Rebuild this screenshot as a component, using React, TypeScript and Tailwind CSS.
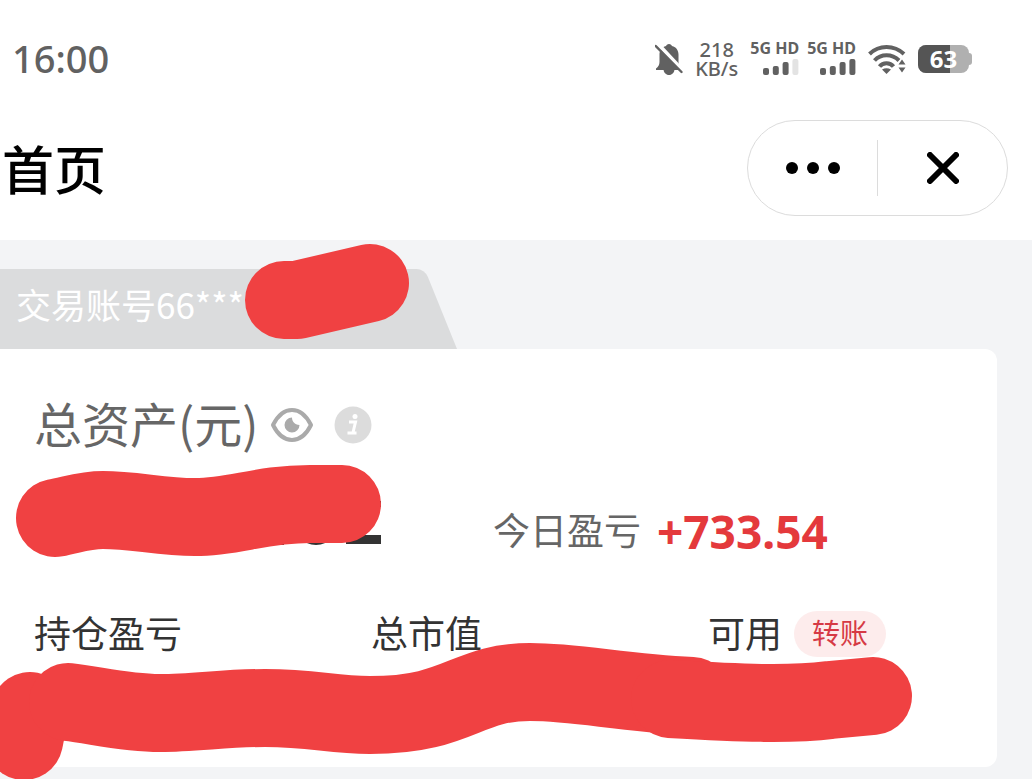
import { useState } from 'react';

function BellOffIcon() {
  return (
    <svg viewBox="0 0 28 33" className="w-7 h-[33px]" aria-hidden="true">
      <path d="M14 1c1.7 0 2.6 1 2.9 2 4.600 1 6.600 4.600 6.600 8.600V19c0 3 .8 5 2.700 6.500v1.500H1v-1.500C3.200 24 4.500 22 4.500 19v-7.400C4.500 7.500 6.600 4 11.100 3c.3-1 1.200-2 2.900-2z" fill="#616161" />
      <path d="M8.500 26h11c0 3.500-2.500 6-5.500 6s-5.500-2.500-5.500-6z" fill="#616161" />
      <path d="M2 0L28 28" stroke="#fff" strokeWidth="4" />
      <path d="M.8 3L26.500 29" stroke="#616161" strokeWidth="2.400" strokeLinecap="round" />
    </svg>
  );
}

function Signal({ bars }: { bars: number }) {
  return (
    <div className="flex flex-col items-end gap-px pb-1">
      <span className="text-[16px] leading-[18px] font-bold">5G HD</span>
      <svg viewBox="0 0 36 17" className="w-9 h-[17px]" aria-hidden="true">
        {[7, 9, 13, 16].map((h, i) => (
          <rect key={h} x={i * 9.8} y={17 - h} width="6" height={h} rx="2" fill={i < bars ? '#616161' : '#e3e3e3'} />
        ))}
      </svg>
    </div>
  );
}

function WifiIcon() {
  return (
    <svg viewBox="0 0 38 32" className="w-[38px] h-8" fill="none" stroke="#616161" strokeWidth="4" aria-hidden="true">
      <path d="M1.500 11C11 1.700 26 1.700 36 11" />
      <path d="M6.500 17.500C13 10.500 24 10.500 31 17.500" />
      <path d="M11.500 23.500C15 19 22 19 25.500 23.500" />
      <path d="M14 26.500Q18.500 24 23 26.500L18.500 31z" fill="#616161" stroke="none" />
      <path d="M28 23l6-9 6 9v9H26z" fill="#fff" stroke="none" />
      <path d="M30.500 21.500l3.500-5 3.500 5zM30.500 24.500l3.500 5 3.500-5z" fill="#616161" stroke="none" />
    </svg>
  );
}

function Battery({ level }: { level: number }) {
  return (
    <div className="flex items-center">
      <div className="relative flex items-center justify-center w-[51px] h-7 rounded-lg bg-[#b0b0b0]">
        <div className="absolute inset-y-0 left-0 rounded-l-lg bg-[#555]" style={{ width: `${level}%` }} />
        <span className="relative text-[24px] leading-7 font-bold text-white">{level}</span>
      </div>
      <div className="w-[3px] h-3 rounded-r-full bg-[#b0b0b0]" />
    </div>
  );
}

// Trazo rojo que tapa los datos privados
function Scribble({ paths, className }: { paths: string[]; className: string }) {
  return (
    <svg className={`absolute overflow-visible pointer-events-none ${className}`} fill="none" stroke="#f04142" strokeWidth="78" strokeLinecap="round" strokeLinejoin="round" aria-hidden="true">
      {paths.map(d => <path key={d} d={d} />)}
    </svg>
  );
}

function StatusBar() {
  return (
    <div className="flex items-center justify-between h-[118px] pl-3 pr-[60px] text-[#616161]">
      <time className="pb-0.5 text-[38px] leading-[48px] font-medium">16:00</time>
      <div className="flex items-center gap-3">
        <BellOffIcon />
        <div className="flex flex-col items-center text-[20px] leading-[19px] font-medium font-['Noto_Sans',sans-serif]">
          <span>218</span>
          <span>KB/s</span>
        </div>
        <div className="flex gap-2">
          <Signal bars={3} />
          <Signal bars={4} />
        </div>
        <WifiIcon />
        <Battery level={63} />
      </div>
    </div>
  );
}

export default function App() {
  const [visible, setVisible] = useState(true);

  return (
    <main className="relative min-h-screen overflow-hidden bg-[#f3f4f6] pb-3 font-['Noto_Sans','Noto_Sans_CJK_SC',sans-serif]">
      <header className="bg-white">
        <StatusBar />
        <div className="flex items-center justify-between pt-0.5 pl-0.5 pr-6 pb-6">
          <h1 className="pt-1 text-[52px] leading-[72px] font-medium text-black">首页</h1>
          <div className="flex items-center w-[261px] h-24 rounded-full border border-[#dcdcdc]">
            <button aria-label="更多" className="flex-1 flex justify-center gap-[9px]">
              <span className="size-3 rounded-full bg-black" />
              <span className="size-3 rounded-full bg-black" />
              <span className="size-3 rounded-full bg-black" />
            </button>
            <div className="w-px h-14 bg-[#dcdcdc]" />
            <button aria-label="关闭" className="flex-1 flex justify-center">
              <svg viewBox="0 0 32 32" className="size-8" stroke="#000" strokeWidth="6" strokeLinecap="round" aria-hidden="true">
                <path d="M3 3l26 26M29 3L3 29" />
              </svg>
            </button>
          </div>
        </div>
      </header>

      {/* Cuenta */}
      <div className="relative w-[457px] h-20 mt-[29px] pl-4">
        <div className="absolute inset-0 origin-bottom-right skew-x-[22deg] rounded-tr-lg bg-[#dbdcdd]" />
        <p className="relative pt-2 text-[35px] leading-[54px] text-white font-['Noto_Sans_CJK_SC',sans-serif]">交易账号66***</p>
        <Scribble className="left-[244px] -top-[25px] w-[165px] h-24" paths={['M40 56L53 56L126 39']} />
      </div>

      {/* Resumen */}
      <section className="relative mr-[35px] pl-[34px] pt-[42px] pb-[30px] bg-white rounded-r-xl font-['Noto_Sans_CJK_SC',sans-serif]">
        <div className="flex items-center h-[68px]">
          <h2 className="pb-1.5 text-[48px] leading-[62px] text-[#666]">总资产(元)</h2>
          <button aria-label="显示金额" aria-pressed={visible} onClick={() => setVisible(v => !v)} className="ml-3">
            <svg viewBox="0 0 44 36" className="w-11 h-9" aria-hidden="true">
              <path d="M3 18C8 8 14 3 22 3s14 5 19 15c-5 10-11 15-19 15S8 28 3 18z" fill="none" stroke="#aaa" strokeWidth="4" strokeLinejoin="round" />
              <path d="M22 10.500c0 4 2.500 7 7.500 7.500a7.500 7.500 0 1 1-7.500-7.500z" fill="#aaa" />
            </svg>
          </button>
          <button aria-label="说明" className="ml-5">
            <svg viewBox="0 0 38 38" className="size-[38px]" aria-hidden="true">
              <circle cx="19" cy="19" r="18.500" fill="#dcdcdc" />
              <circle cx="21" cy="10.500" r="2.500" fill="#fff" />
              <path d="M15 16h6.500l-2.500 10.500M13.500 27h9" fill="none" stroke="#fff" strokeWidth="3" />
            </svg>
          </button>
        </div>

        <div className="flex items-center h-[60px] mt-[42px]">
          <div className="relative w-[459px] h-full">
            <svg className="absolute left-0 top-0 w-[350px] h-[50px]" fill="#333" aria-hidden="true">
              <path d="M312 34h35v9h-35zM344 -6h3v12h-3z" />
              <ellipse cx="282" cy="38" rx="12" ry="6" />
              <path d="M98 40h6l-1 11h-4zM244 36h6v8h-6z" />
            </svg>
            <Scribble
              className="-left-[18px] -top-9 w-[366px] h-[93px]"
              paths={['M39 53C59 49 69 45 87 45C119 45 144 52 179 52C219 52 244 39 294 39L326 39']}
            />
          </div>
          <span className="pb-1 text-[37px] leading-[56px] text-[#666]">今日盈亏</span>
          <strong className="ml-4 text-[46px] leading-[60px] font-bold text-[#e4393c] font-['Noto_Sans',sans-serif]">+733.54</strong>
        </div>

        <div className="relative grid grid-cols-[35%_35%_1fr] mt-[50px] h-[126px] text-[37px] leading-[42px] text-[#333]">
          <span>持仓盈亏</span>
          <span>总市值</span>
          <div className="flex items-start gap-3">
            <span>可用</span>
            <button className="px-[18px] pb-1 rounded-full bg-[#fdecec] text-[28px] leading-[42px] text-[#d63a45]">转账</button>
          </div>
          <Scribble
            className="-left-[34px] top-8 w-[913px] h-[136px]"
            paths={[
              'M24 98L30 68',
              'M68 59C95 62 125 70 160 70C195 70 225 65 265 65C315 65 330 72 370 72C460 72 465 39 530 39C580 39 620 50 692 53',
              'M670 56C740 60 790 62 830 57L873 53',
            ]}
          />
        </div>
      </section>
    </main>
  );
}
